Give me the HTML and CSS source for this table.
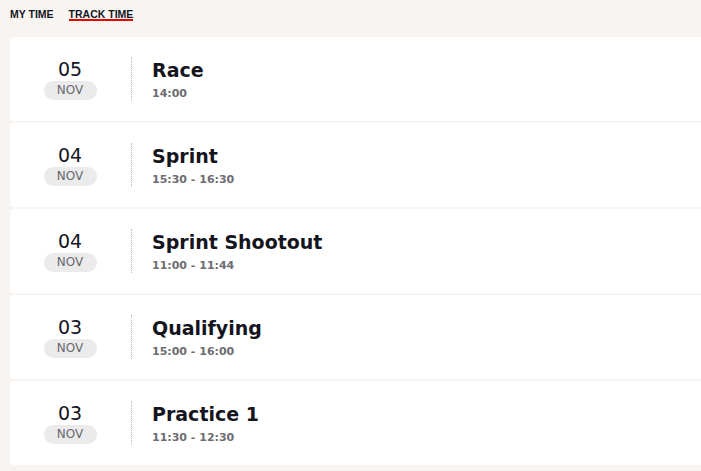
FILE: index.html
```html
<!DOCTYPE html>
<html lang="en">
<head>
  <meta charset="UTF-8">
  <meta name="viewport" content="width=device-width, initial-scale=1.0">
  <title>Schedule</title>
  <link rel="stylesheet" href="styles.css">
</head>
<body>
  <div class="tabs">
    <span class="tab">MY TIME</span>
    <span class="tab active">TRACK TIME</span>
  </div>

  <div class="sessions">
    <div class="session">
      <div class="date">
        <span class="day">05</span>
        <span class="month">NOV</span>
      </div>
      <div class="info">
        <div class="name">Race</div>
        <div class="time">14:00</div>
      </div>
    </div>

    <div class="session">
      <div class="date">
        <span class="day">04</span>
        <span class="month">NOV</span>
      </div>
      <div class="info">
        <div class="name">Sprint</div>
        <div class="time">15:30 - 16:30</div>
      </div>
    </div>

    <div class="session">
      <div class="date">
        <span class="day">04</span>
        <span class="month">NOV</span>
      </div>
      <div class="info">
        <div class="name">Sprint Shootout</div>
        <div class="time">11:00 - 11:44</div>
      </div>
    </div>

    <div class="session">
      <div class="date">
        <span class="day">03</span>
        <span class="month">NOV</span>
      </div>
      <div class="info">
        <div class="name">Qualifying</div>
        <div class="time">15:00 - 16:00</div>
      </div>
    </div>

    <div class="session">
      <div class="date">
        <span class="day">03</span>
        <span class="month">NOV</span>
      </div>
      <div class="info">
        <div class="name">Practice 1</div>
        <div class="time">11:30 - 12:30</div>
      </div>
    </div>
  </div>
</body>
</html>
```

FILE: styles.css
```css
* {
  margin: 0;
  padding: 0;
  box-sizing: border-box;
}

body {
  background-color: #f7f4f1;
  font-family: "DejaVu Sans", "Liberation Sans", sans-serif;
  color: #15151e;
  overflow: hidden;
}

.tabs {
  display: flex;
  gap: 15px;
  padding: 8px 10px 0 10px;
  height: 37px;
}

.tab {
  font-family: "Liberation Sans", Arial, sans-serif;
  font-size: 10.5px;
  font-weight: bold;
  line-height: 12px;
  height: 13px;
  color: #15151e;
}

.tab.active {
  border-bottom: 2px solid #e10600;
}

.sessions {
  display: flex;
  flex-direction: column;
  gap: 2px;
  padding-left: 10px;
  margin-right: -10px;
}

.session {
  display: flex;
  align-items: center;
  height: 84px;
  background-color: #fff;
  border-radius: 4px;
}

.date {
  width: 120px;
  display: flex;
  flex-direction: column;
  align-items: center;
}

.day {
  font-size: 19px;
  line-height: 20px;
  color: #15151e;
}

.month {
  margin-top: 2px;
  width: 53px;
  height: 19px;
  line-height: 19px;
  text-align: center;
  font-size: 12px;
  color: #67676d;
  background-color: #ebebeb;
  border-radius: 10px;
}

.info {
  height: 44px;
  border-left: 1px dotted #bbb;
  padding-left: 20px;
  margin-left: 1px;
}

.name {
  font-size: 19px;
  font-weight: bold;
  line-height: 22px;
  margin-top: 2px;
}

.time {
  font-size: 11px;
  font-weight: bold;
  line-height: 14px;
  margin-top: 6px;
  color: #6c6c72;
}
```
